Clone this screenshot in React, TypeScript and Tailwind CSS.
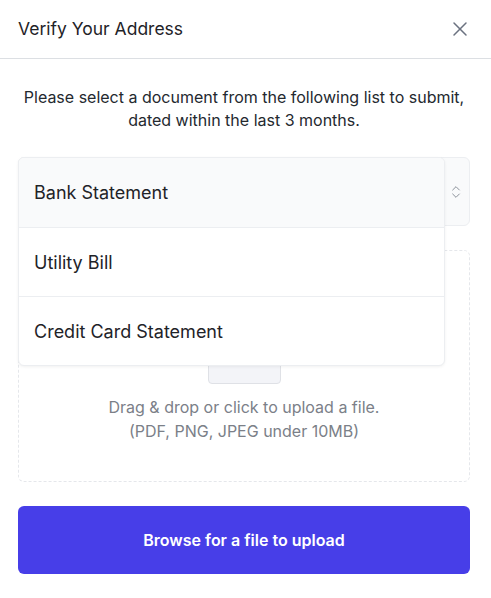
import { X, ChevronsUpDown } from 'lucide-react';

const documents = ['Bank Statement', 'Utility Bill', 'Credit Card Statement'];

export default function App() {
  return (
    <div className="min-h-screen bg-white font-['Inter',sans-serif] text-[#1f2328]">
      {/* Header */}
      <div className="flex h-[59px] items-center justify-between border-b border-[#dcdfe3] pl-[18px] pr-[19px]">
        <h2 className="text-[17.5px] font-normal">Verify Your Address</h2>
        <button className="text-[#6b7280]">
          <X className="h-[24px] w-[24px]" strokeWidth={1.5} />
        </button>
      </div>

      <div className="pl-[18px] pr-[21px] pt-[27px]">
        <p className="text-center text-[16px] leading-[23px] text-[#24292f]">
          Please select a document from the following list to submit,
          <br />
          dated within the last 3 months.
        </p>

        {/* Select with open menu */}
        <div className="relative mt-[25px]">
          <div className="flex h-[69px] items-center justify-between rounded-md border border-[#eceef1] bg-[#f9fafb] pl-[15px] pr-[5px]">
            <span className="text-[18px] text-[#1f2328]">Bank Statement</span>
            <ChevronsUpDown className="h-[16px] w-[16px] text-[#8b919a]" strokeWidth={1.5} />
          </div>

          <ul className="absolute left-0 top-0 z-10 w-[427px] overflow-hidden rounded-md border border-[#eceef1] bg-white shadow-[0_1px_3px_rgba(0,0,0,0.06)]">
            {documents.map((doc, i) => (
              <li
                key={doc}
                className={`flex h-[69px] items-center pl-[15px] text-[18px] text-[#1f2328] ${i === 0 ? 'bg-[#f9fafb]' : 'border-t border-[#eceef1]'}`}
              >
                {doc}
              </li>
            ))}
          </ul>

          {/* Dropzone */}
          <div className="mt-[24px] flex h-[232px] flex-col items-center justify-end rounded-md border border-dashed border-[#e5e7eb] pb-[38px]">
            <div className="h-[72px] w-[73px] rounded-sm border border-[#dfe1e6] bg-[#f3f4f8]" />
            <p className="mt-[11px] text-center text-[16px] leading-[24px] text-[#7b8088]">
              Drag &amp; drop or click to upload a file.
              <br />
              (PDF, PNG, JPEG under 10MB)
            </p>
          </div>
        </div>

        <button className="mt-[24px] flex h-[68px] w-full items-center justify-center rounded-md bg-[#473ee8] text-[16px] font-semibold text-white">
          Browse for a file to upload
        </button>
      </div>
    </div>
  );
}
